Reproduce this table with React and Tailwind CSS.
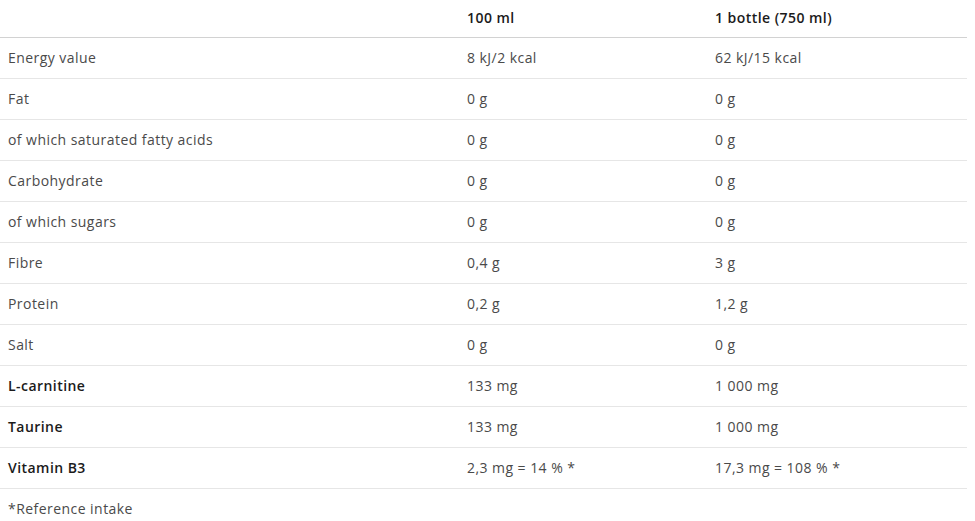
const rows = [
  { label: "Energy value", a: "8 kJ/2 kcal", b: "62 kJ/15 kcal" },
  { label: "Fat", a: "0 g", b: "0 g" },
  { label: "of which saturated fatty acids", a: "0 g", b: "0 g" },
  { label: "Carbohydrate", a: "0 g", b: "0 g" },
  { label: "of which sugars", a: "0 g", b: "0 g" },
  { label: "Fibre", a: "0,4 g", b: "3 g" },
  { label: "Protein", a: "0,2 g", b: "1,2 g" },
  { label: "Salt", a: "0 g", b: "0 g" },
  { label: "L-carnitine", a: "133 mg", b: "1 000 mg", bold: true },
  { label: "Taurine", a: "133 mg", b: "1 000 mg", bold: true },
  { label: "Vitamin B3", a: "2,3 mg = 14 % *", b: "17,3 mg = 108 % *", bold: true },
];

export default function App() {
  return (
    <div className="w-[975px] bg-white font-['Open_Sans',sans-serif] text-[14px] tracking-[0.45px] text-[#4a4a4a]">
      <table className="w-[967px] border-collapse table-fixed">
        <colgroup>
          <col className="w-[459px]" />
          <col className="w-[248px]" />
          <col className="w-[260px]" />
        </colgroup>
        <thead>
          <tr className="h-[37px] border-b border-[#d2d2d2]">
            <th className="pl-2 pb-[2px] text-left" />
            <th className="pl-2 pb-[2px] text-left font-semibold text-[#1b1b1b]">100 ml</th>
            <th className="pl-2 pb-[2px] text-left font-semibold text-[#1b1b1b]">1 bottle (750 ml)</th>
          </tr>
        </thead>
        <tbody>
          {rows.map((r) => (
            <tr key={r.label} className="h-[41px] border-b border-[#e6e6e6]">
              <td className={r.bold ? "pl-2 font-semibold text-[#1b1b1b]" : "pl-2"}>{r.label}</td>
              <td className="pl-2">{r.a}</td>
              <td className="pl-2">{r.b}</td>
            </tr>
          ))}
        </tbody>
      </table>
      <p className="pl-2 pt-[11px] pb-[4px] leading-[17px]">*Reference intake</p>
    </div>
  );
}
